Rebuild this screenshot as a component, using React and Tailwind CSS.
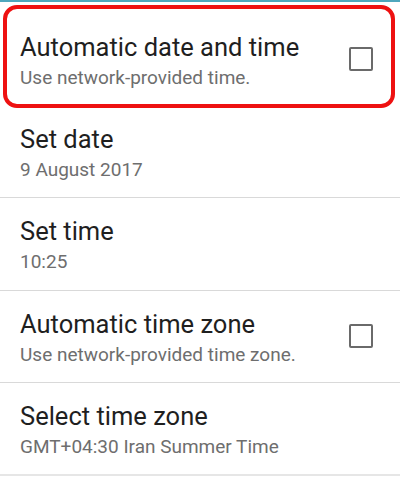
export default function App() {
  const font = { fontFamily: 'Roboto, "Noto Sans", sans-serif' };
  const Row = ({ title, sub, check, border = "border-b border-[#d9d9d9]" }) => (
    <div className={`h-[92.5px] flex items-center pl-5 pr-[27px] ${border}`}>
      <div className="flex-1 flex flex-col pt-[2px]">
        <div className="text-[25.5px] leading-[30px] text-[#1f1f1f]">{title}</div>
        <div className="text-[19px] leading-[22px] mt-[5px] text-[#6e6e6e]">{sub}</div>
      </div>
      {check && (
        <div className="w-[24px] h-[24px] border-2 border-[#6a6a6a] rounded-[2px]" />
      )}
    </div>
  );
  return (
    <div className="w-[400px] h-[500px] bg-white overflow-hidden relative" style={font}>
      <div className="h-[2px] bg-[#4ea7bd]" />
      <div className="h-[11px]" />
      <div className="relative">
        <Row title="Automatic date and time" sub="Use network-provided time." check border="" />
        <div className="absolute left-[3px] right-[5px] top-[-8px] bottom-[-2px] border-[4px] border-[#ee1111] rounded-[14px] pointer-events-none" />
      </div>
      <Row title="Set date" sub="9 August 2017" />
      <Row title="Set time" sub="10:25" />
      <Row title="Automatic time zone" sub="Use network-provided time zone." check />
      <Row title="Select time zone" sub="GMT+04:30 Iran Summer Time" border="border-b-2 border-[#e6e6e6]" />
      <div className="pl-5 pt-[20px] text-[25.5px] leading-[30px] text-[#1f1f1f]">Use 24-hour format</div>
    </div>
  );
}
